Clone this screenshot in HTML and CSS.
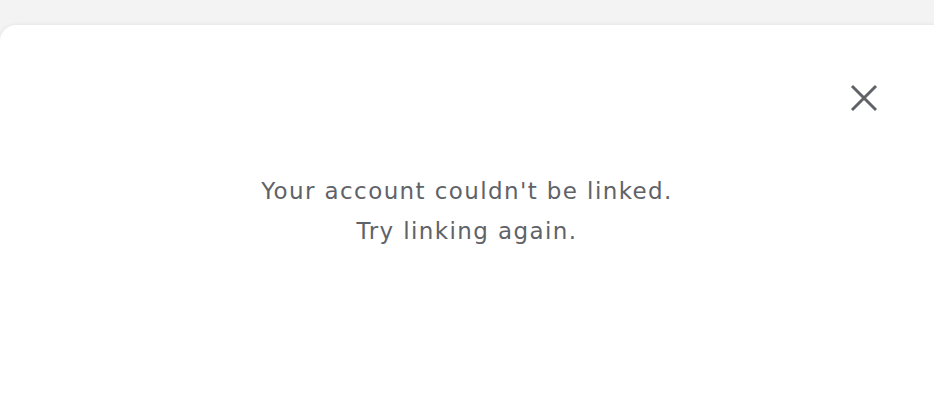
FILE: index.html
```html
<!DOCTYPE html>
<html>
<head>
<meta charset="utf-8">
<link rel="stylesheet" href="styles.css">
</head>
<body>
<div class="sheet">
  <div class="top">
    <button class="close" aria-label="Close">
      <svg width="28" height="28" viewBox="0 0 28 28"><path d="M2 2 L26 26 M26 2 L2 26" stroke="#5f6368" stroke-width="3" fill="none"/></svg>
    </button>
  </div>
  <p class="msg">Your account couldn't be linked.<br>Try linking again.</p>
</div>
</body>
</html>
```
FILE: styles.css
```css
html, body { margin: 0; padding: 0; }
body {
  width: 934px;
  height: 394px;
  background: #f3f3f3;
  overflow: hidden;
  font-family: "DejaVu Sans", "Open Sans", sans-serif;
}
.sheet {
  margin-top: 25px;
  width: 950px;
  height: 369px;
  background: #fff;
  border-radius: 16px 16px 0 0;
  box-shadow: 0 0 4px rgba(0,0,0,0.08);
}
.top {
  display: flex;
  justify-content: flex-end;
  padding: 59px 72px 0 0;
}
.close {
  border: 0;
  background: none;
  padding: 0;
  width: 28px;
  height: 28px;
  display: block;
}
.close svg { display: block; }
.msg {
  width: 934px;
  margin: 59px 0 0;
  text-align: center;
  color: #5f6368;
  font-size: 23px;
  letter-spacing: 1.4px;
  line-height: 40px;
}
```
